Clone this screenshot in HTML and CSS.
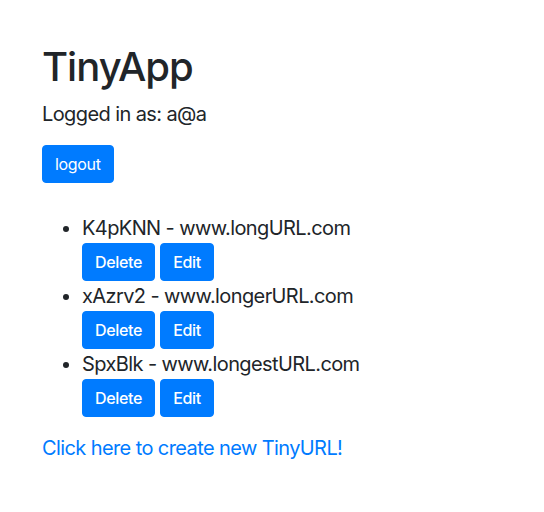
FILE: index.html
```html
<!DOCTYPE html>
<html>
<head>
<meta charset="utf-8">
<link rel="stylesheet" href="styles.css">
</head>
<body>
<main class="page">
  <h1 class="title">TinyApp</h1>
  <p class="user">Logged in as: a@a</p>
  <form class="logout-form"><button type="button" class="btn">logout</button></form>
  <ul class="urls">
    <li class="url-item">
      <span class="url-text">K4pKNN - www.longURL.com</span>
      <div class="actions"><button type="button" class="btn btn-bold">Delete</button><button type="button" class="btn btn-bold">Edit</button></div>
    </li>
    <li class="url-item">
      <span class="url-text">xAzrv2 - www.longerURL.com</span>
      <div class="actions"><button type="button" class="btn btn-bold">Delete</button><button type="button" class="btn btn-bold">Edit</button></div>
    </li>
    <li class="url-item">
      <span class="url-text">SpxBlk - www.longestURL.com</span>
      <div class="actions"><button type="button" class="btn btn-bold">Delete</button><button type="button" class="btn btn-bold">Edit</button></div>
    </li>
  </ul>
  <a class="create-link" href="#">Click here to create new TinyURL!</a>
</main>
</body>
</html>
```
FILE: styles.css
```css
* { box-sizing: border-box; }
html, body { margin: 0; padding: 0; background: #fff; }
body {
  font-family: Inter, "Noto Sans", "Liberation Sans", sans-serif;
  color: #212529;
  font-size: 20px;
  line-height: 1.5;
  letter-spacing: -0.03em;
}
.page {
  padding: 43px 42px 0 42px;
}
.title {
  margin: 0 0 8px 0;
  font-size: 40px;
  font-weight: 500;
  line-height: 1.2;
  letter-spacing: -0.025em;
}
.user {
  margin: 0 0 16px 0;
}
.logout-form {
  margin: 0 0 30px 0;
}
.btn {
  display: inline-block;
  font-family: inherit;
  font-size: 16px;
  line-height: 24px;
  padding: 6px 12px;
  color: #fff;
  background: #007bff;
  border: 1px solid #007bff;
  border-radius: 4px;
  font-weight: 400;
  letter-spacing: -0.02em;
}
.btn-bold { font-weight: 500; }
.urls {
  margin: 0 0 16px 0;
  padding-left: 40px;
}
.actions {
  display: flex;
  gap: 5px;
}
.create-link {
  color: #007bff;
  text-decoration: none;
}
```
